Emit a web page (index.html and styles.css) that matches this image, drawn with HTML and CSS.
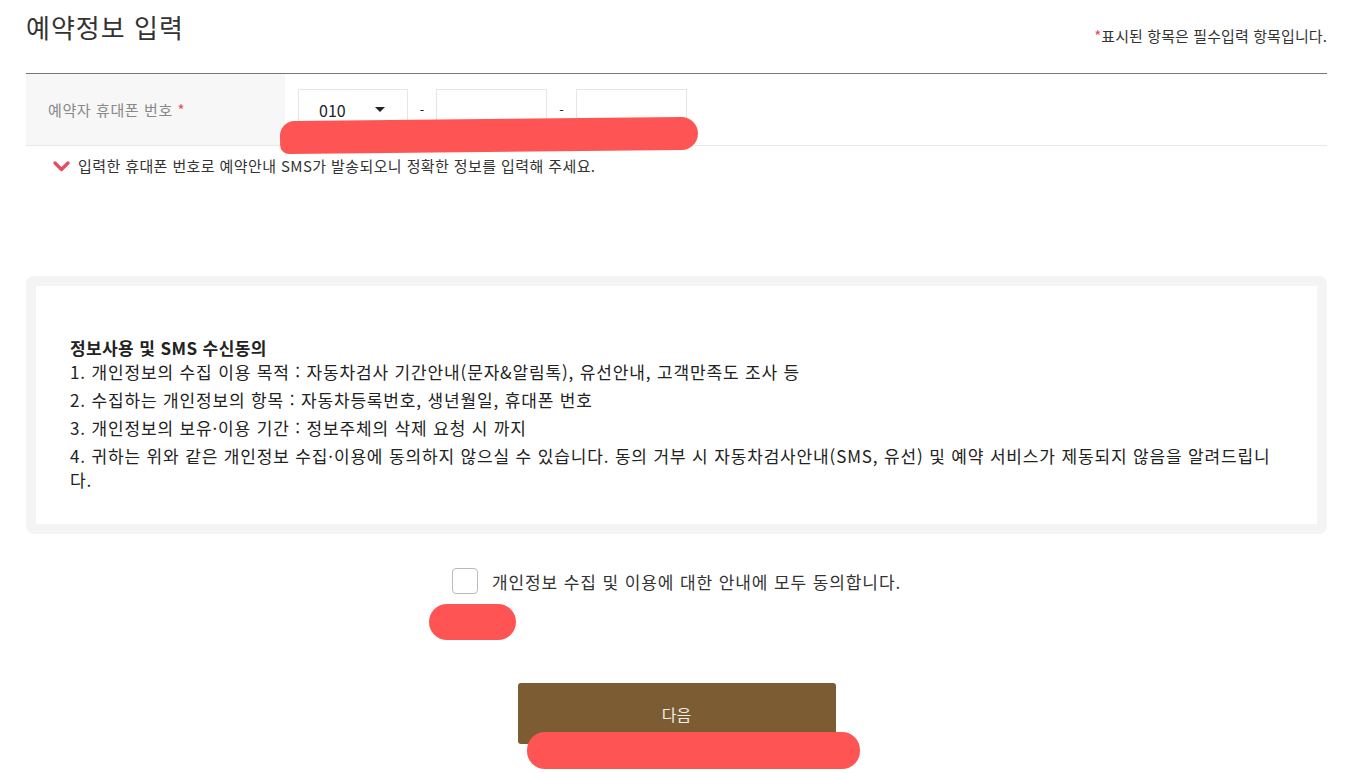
FILE: index.html
```html
<!DOCTYPE html>
<html lang="ko">
<head>
    <meta charset="UTF-8">
    <meta name="viewport" content="width=device-width, initial-scale=1.0">
    <title>예약정보 입력</title>
    <link rel="stylesheet" href="styles.css">
</head>
<body>
    <div class="container">
        <div class="page-head">
            <h1>예약정보 입력</h1>
            <p class="required-note"><span class="star">*</span>표시된 항목은 필수입력 항목입니다.</p>
        </div>

        <table class="form-table">
            <tr>
                <th>예약자 휴대폰 번호 <span class="star">*</span></th>
                <td>
                    <div class="phone-group">
                        <div class="select-box">
                            <span>010</span>
                            <span class="caret"></span>
                        </div>
                        <span class="dash">-</span>
                        <input type="text" class="phone-input">
                        <span class="dash">-</span>
                        <input type="text" class="phone-input">
                    </div>
                </td>
            </tr>
        </table>

        <p class="sms-note">
            <svg class="check-icon" width="17" height="12" viewBox="0 0 17 12">
                <path d="M2 3 L8.5 9.5 L15 3" fill="none" stroke="#e84a5f" stroke-width="3.2" stroke-linecap="round" stroke-linejoin="round"/>
            </svg>
            입력한 휴대폰 번호로 예약안내 SMS가 발송되오니 정확한 정보를 입력해 주세요.
        </p>

        <div class="agree-box">
            <div class="agree-inner">
                <strong>정보사용 및 SMS 수신동의</strong>
                <p>1. 개인정보의 수집 이용 목적 : 자동차검사 기간안내(문자&amp;알림톡), 유선안내, 고객만족도 조사 등</p>
                <p>2. 수집하는 개인정보의 항목 : 자동차등록번호, 생년월일, 휴대폰 번호</p>
                <p>3. 개인정보의 보유·이용 기간 : 정보주체의 삭제 요청 시 까지</p>
                <p>4. 귀하는 위와 같은 개인정보 수집·이용에 동의하지 않으실 수 있습니다. 동의 거부 시 자동차검사안내(SMS, 유선) 및 예약 서비스가 제동되지 않음을 알려드립니다.</p>
            </div>
        </div>

        <label class="agree-check">
            <span class="checkbox"></span>
            개인정보 수집 및 이용에 대한 안내에 모두 동의합니다.
        </label>

        <div class="btn-area">
            <button type="button" class="next-btn">다음</button>
        </div>
    </div>

    <!-- redaction marks drawn over the screenshot -->
    <div class="scribble scribble-phone"></div>
    <div class="scribble scribble-check"></div>
    <div class="scribble scribble-btn"></div>
</body>
</html>
```

FILE: styles.css
```css
body {
    margin: 0;
    padding: 0;
    font-family: "Noto Sans CJK KR", "Noto Sans", sans-serif;
    color: #333;
    background: #fff;
}

.container {
    width: 1301px;
    margin-left: 26px;
    position: relative;
}

.page-head {
    display: flex;
    justify-content: space-between;
    align-items: flex-end;
    height: 73px;
}

h1 {
    margin: 0;
    align-self: flex-start;
    padding-top: 8px;
    font-size: 26px;
    font-weight: 400;
    color: #333;
    line-height: 38px;
    letter-spacing: 1px;
}

.required-note {
    margin: 0 0 27px;
    font-size: 15px;
    line-height: 20px;
    color: #333;
    letter-spacing: 0.1px;
}

.star {
    color: #e84a5f;
}

.form-table {
    width: 100%;
    border-collapse: collapse;
    border-top: 1px solid #777;
}

.form-table th {
    width: 259px;
    height: 72px;
    padding: 0 0 0 22px;
    background: #f7f7f7;
    text-align: left;
    font-size: 15px;
    font-weight: 400;
    color: #888;
    letter-spacing: 0.6px;
    border-bottom: 1px solid #e8e8e8;
    box-sizing: border-box;
}

.form-table td {
    padding: 0 0 0 13px;
    border-bottom: 1px solid #e8e8e8;
}

.phone-group {
    display: flex;
    align-items: center;
}

.select-box {
    width: 110px;
    height: 41px;
    box-sizing: border-box;
    border: 1px solid #e5e5e5;
    display: flex;
    align-items: center;
    justify-content: space-between;
    padding: 0 22px 0 20px;
    font-size: 16px;
    color: #222;
}

.caret {
    width: 0;
    height: 0;
    border-left: 5px solid transparent;
    border-right: 5px solid transparent;
    border-top: 5px solid #222;
}

.dash {
    width: 28px;
    text-align: center;
    font-size: 13px;
    color: #222;
}

.phone-input {
    width: 111px;
    height: 41px;
    box-sizing: border-box;
    border: 1px solid #e5e5e5;
    outline: none;
}

.phone-input + .dash {
    width: 29px;
}

.sms-note {
    margin: 9px 0 0 27px;
    font-size: 15px;
    color: #333;
    letter-spacing: 0.4px;
    display: flex;
    align-items: center;
    gap: 8px;
}

.agree-box {
    margin-top: 100px;
    background: #f4f4f4;
    border-radius: 8px;
    padding: 10px;
}

.agree-inner {
    background: #fff;
    padding: 50px 40px 32px 34px;
    font-size: 17px;
    color: #222;
    line-height: 24px;
    letter-spacing: 0.85px;
}

.agree-inner strong {
    display: block;
    font-weight: 700;
    letter-spacing: 0.4px;
}

.agree-inner p {
    margin: 4px 0 0;
}

.agree-inner strong + p {
    margin-top: 0;
}

.agree-check {
    display: flex;
    align-items: center;
    justify-content: center;
    gap: 14px;
    margin-top: 34px;
    font-size: 17px;
    color: #333;
    letter-spacing: 0.9px;
}

.checkbox {
    width: 26px;
    height: 26px;
    box-sizing: border-box;
    border: 1px solid #bbb;
    border-radius: 4px;
    background: #fff;
}

.btn-area {
    display: flex;
    justify-content: center;
    margin-top: 89px;
}

.next-btn {
    width: 318px;
    height: 61px;
    border: none;
    border-radius: 3px;
    background: #7b5c33;
    color: #f3eee6;
    font-family: inherit;
    font-size: 16px;
    cursor: pointer;
}

.scribble {
    position: absolute;
    background: #ff5454;
}

.scribble-phone {
    left: 280px;
    top: 119px;
    width: 418px;
    height: 33px;
    border-radius: 16px 18px 18px 10px;
    transform: rotate(-0.6deg);
}

.scribble-check {
    left: 429px;
    top: 604px;
    width: 87px;
    height: 36px;
    border-radius: 18px;
}

.scribble-btn {
    left: 527px;
    top: 732px;
    width: 333px;
    height: 37px;
    border-radius: 18px;
}
```
